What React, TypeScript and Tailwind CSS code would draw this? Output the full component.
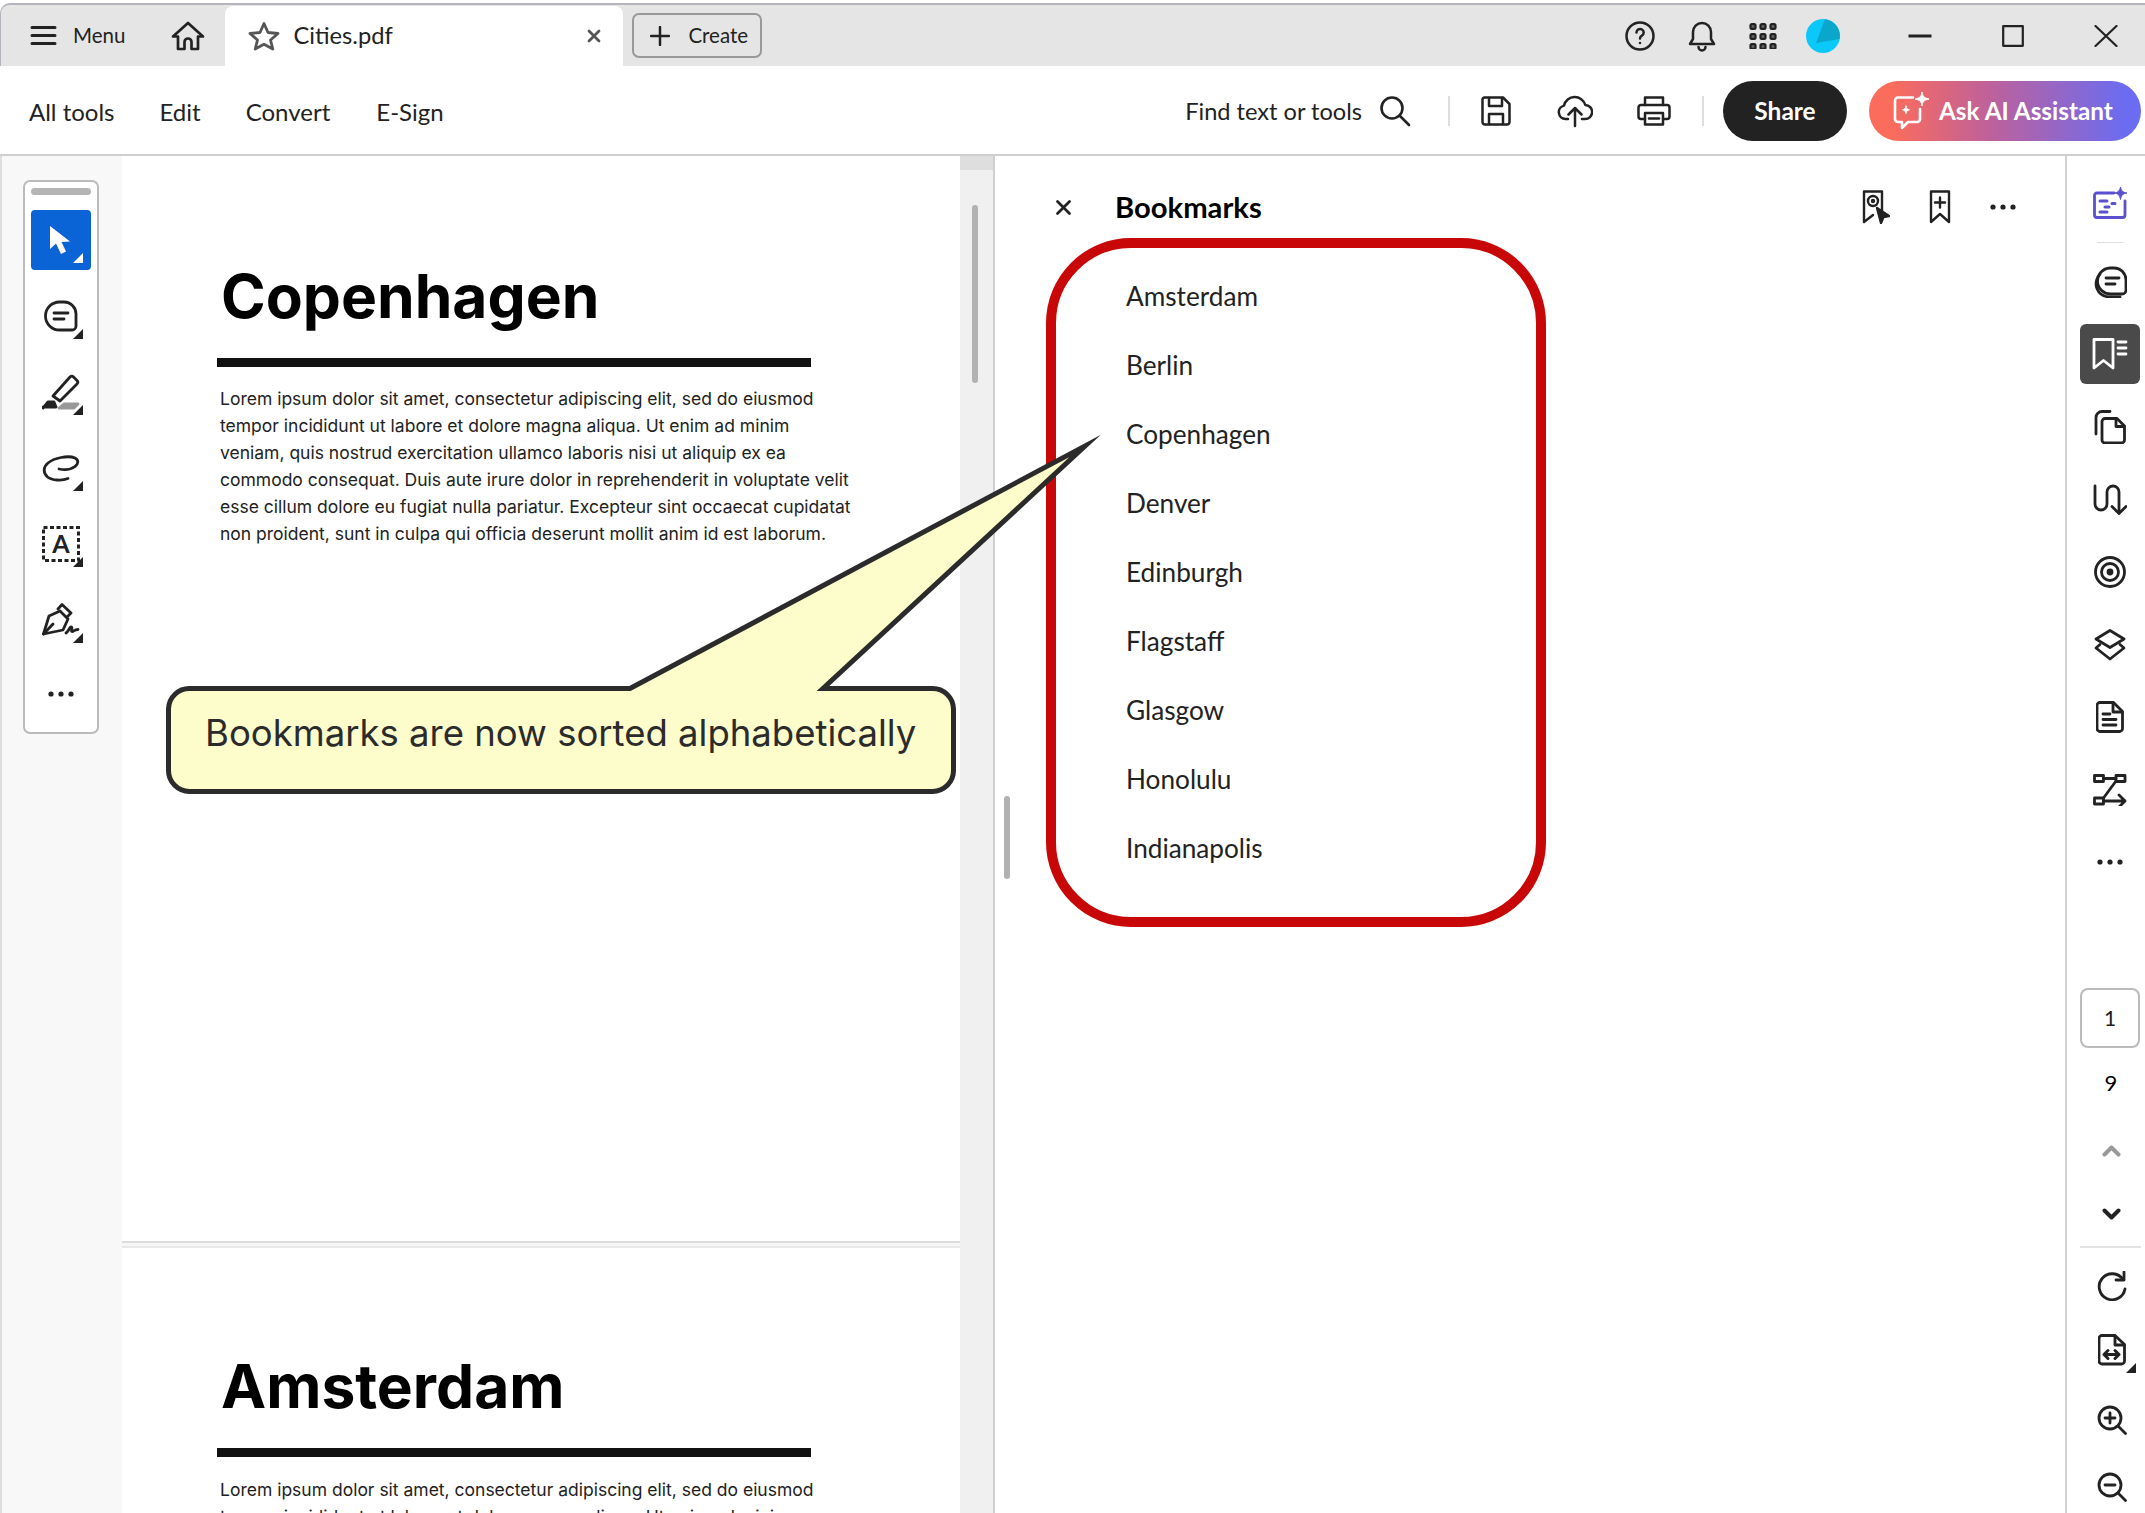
import React from "react";

type SP = { w: number; h: number; children: React.ReactNode; stroke?: string; sw?: number };
const S = ({ w, h, children, stroke = "#222222", sw = 2.5 }: SP) => (
  <svg width={w} height={h} viewBox={`0 0 ${w} ${h}`} fill="none" stroke={stroke} strokeWidth={sw} strokeLinecap="round" strokeLinejoin="round" className="block shrink-0">
    {children}
  </svg>
);

const Tri = ({ light }: { light?: boolean }) => (
  <svg width="10" height="10" viewBox="0 0 10 10" className="absolute right-[8px] bottom-[7px]">
    <path d="M10 0V10H0Z" fill={light ? "#ffffff" : "#222222"} />
  </svg>
);

const ToolBtn = ({ children, active }: { children: React.ReactNode; active?: boolean }) => (
  <div className={`relative w-[60px] h-[60px] flex items-center justify-center rounded-[4px] ${active ? "bg-[#0a64d6]" : ""}`}>
    {children}
    <Tri light={active} />
  </div>
);

const Dots = ({ w = 26 }: { w?: number }) => (
  <svg width={w} height="6" viewBox={`0 0 ${w} 6`} className="block">
    <circle cx="3" cy="3" r="2.6" fill="#222222" />
    <circle cx={w / 2} cy="3" r="2.6" fill="#222222" />
    <circle cx={w - 3} cy="3" r="2.6" fill="#222222" />
  </svg>
);

const RailRow = ({ children, h = "h-[72.5px]" }: { children: React.ReactNode; h?: string }) => (
  <div className={`${h} w-[60px] shrink-0 flex items-center justify-center`}>{children}</div>
);

const paragraph = [
  "Lorem ipsum dolor sit amet, consectetur adipiscing elit, sed do eiusmod",
  "tempor incididunt ut labore et dolore magna aliqua. Ut enim ad minim",
  "veniam, quis nostrud exercitation ullamco laboris nisi ut aliquip ex ea",
  "commodo consequat. Duis aute irure dolor in reprehenderit in voluptate velit",
  "esse cillum dolore eu fugiat nulla pariatur. Excepteur sint occaecat cupidatat",
  "non proident, sunt in culpa qui officia deserunt mollit anim id est laborum.",
];

const bookmarks = ["Amsterdam", "Berlin", "Copenhagen", "Denver", "Edinburgh", "Flagstaff", "Glasgow", "Honolulu", "Indianapolis"];

const Page = ({ title, lines, pad, h, titleGap }: { title: string; lines: string[]; pad: string; h: string; titleGap: string }) => (
  <div className={`${h} ${pad} bg-white overflow-hidden font-[Inter,sans-serif] shrink-0`}>
    <h1 className="h-[80px] pl-[99px] flex items-center text-[60.5px] font-bold text-black leading-none whitespace-nowrap">{title}</h1>
    <div className="ml-[95px] mt-[22px] w-[594px] h-[9px] bg-[#111111]" />
    <div className={`pl-[98px] ${titleGap}`}>
      {lines.map((l) => (
        <p key={l} className="text-[17.5px] leading-[27px] text-[#222222] whitespace-nowrap">{l}</p>
      ))}
    </div>
  </div>
);

export default function App() {
  return (
    <div className="relative h-screen w-full overflow-hidden bg-white font-[Lato,sans-serif] text-[#222222] pt-[3px]">
      {/* Title bar */}
      <div className="h-[63px] bg-[#e5e5e5] border-t-2 border-l border-[#b4b4bc] rounded-tl-[10px] flex items-center">
        <div className="ml-[29px]">
          <S w={27} h={21} sw={3}>
            <path d="M2 2.5H25M2 10.5H25M2 18.5H25" />
          </S>
        </div>
        <span className="ml-[16px] pb-[1px] text-[20.5px]">Menu</span>
        <div className="ml-[46px]">
          <S w={34} h={30} sw={2.7}>
            <path d="M17 2 L32 15.5 H27 V28 H20.5 V21 a3.5 3.5 0 0 0 -7 0 V28 H7 V15.5 H2 Z" />
          </S>
        </div>
        <div className="ml-[20px] w-[398px] h-[60px] self-end bg-white rounded-t-[8px] flex items-center">
          <div className="ml-[23px]">
            <S w={32} h={30} stroke="#555555" sw={2.8}>
              <path d="M16 2.5 L20 11.5 L30 12.5 L22.5 19 L24.8 28 L16 23.2 L7.2 28 L9.5 19 L2 12.5 L12 11.5 Z" />
            </S>
          </div>
          <span className="ml-[13px] pb-[1px] text-[23.7px] text-[#222222]">Cities.pdf</span>
          <div className="ml-auto mr-[22px]">
            <S w={14} h={14} stroke="#555555" sw={2.8}>
              <path d="M2 2L12 12M12 2L2 12" />
            </S>
          </div>
        </div>
        <div className="ml-[9px] w-[130px] h-[45px] border-2 border-[#999999] rounded-[7px] flex items-center">
          <div className="ml-[16px]">
            <S w={20} h={20}>
              <path d="M10 1V19M1 10H19" />
            </S>
          </div>
          <span className="ml-[18px] pb-[1px] text-[20.5px]">Create</span>
        </div>
        <div className="ml-auto">
          <S w={30} h={30}>
            <circle cx="15" cy="15" r="13.5" />
            <path d="M11.5 11.5a3.6 3.6 0 1 1 5.4 3.2c-1.2.7-1.9 1.4-1.9 2.8" />
            <path d="M15 22h.01" />
          </S>
        </div>
        <div className="ml-[33px]">
          <S w={28} h={32}>
            <path d="M2 24h24l-3-5V12A9 9 0 0 0 5 12v7Z" />
            <path d="M10.5 27a3.5 3.5 0 0 0 7 0" />
          </S>
        </div>
        <div className="ml-[33px]">
          <S w={28} h={26} sw={2.2}>
            {[0, 10, 20].map((y) =>
              [0, 10, 20].map((x) => <rect key={`${x}-${y}`} x={x + 1.5} y={y + 1.2} width="5" height="4.6" rx="1.4" fill="#666666" />)
            )}
          </S>
        </div>
        <div className="ml-[29px]">
          <svg width="34" height="34" viewBox="0 0 34 34" className="block">
            <circle cx="17" cy="17" r="17" fill="#0bc8fa" />
            <path d="M19 .2 A17 17 0 0 1 33.6 20 L10 24 Z" fill="#0aa6cc" />
          </svg>
        </div>
        <div className="ml-[67px]">
          <S w={26} h={4} sw={3}>
            <path d="M1.5 2H24.5" strokeLinecap="butt" />
          </S>
        </div>
        <div className="ml-[69px]">
          <S w={22} h={22} sw={2.2}>
            <rect x="1.2" y="1.2" width="19.6" height="19.6" />
          </S>
        </div>
        <div className="ml-[70px] mr-[27px]">
          <S w={24} h={22} sw={2.2}>
            <path d="M1.5 1L22.5 21M22.5 1L1.5 21" />
          </S>
        </div>
      </div>

      {/* Toolbar */}
      <div className="h-[90px] bg-white border-b-2 border-[#cfcfcf] flex items-center text-[24px]">
        <span className="ml-[29px] pt-[3px]">All tools</span>
        <span className="ml-[45px] pt-[3px]">Edit</span>
        <span className="ml-[45px] pt-[3px]">Convert</span>
        <span className="ml-[46px] pt-[3px]">E-Sign</span>
        <span className="ml-auto pt-[3px] text-[23.6px]">Find text or tools</span>
        <div className="ml-[17px] mt-[2px]">
          <S w={32} h={32} sw={2.6}>
            <circle cx="13" cy="13" r="10.5" />
            <path d="M21 21L30 30" />
          </S>
        </div>
        <div className="ml-[37px] mt-[2px] w-[2px] h-[30px] bg-[#dddddd]" />
        <div className="ml-[31px] mt-[2px]">
          <S w={30} h={30}>
            <path d="M3.5 1.5H22L28.5 8V26a2.5 2.5 0 0 1-2.5 2.5H4A2.5 2.5 0 0 1 1.5 26V3.5a2 2 0 0 1 2-2Z" />
            <path d="M8 2v8h13V2" />
            <path d="M8 28V18h14v10" />
          </S>
        </div>
        <div className="ml-[46px] mt-[2px]">
          <S w={36} h={34}>
            <path d="M11 25H8.5A6.8 6.8 0 0 1 7 11.6 11 11 0 0 1 28.3 11a7 7 0 0 1-.3 14h-3" />
            <path d="M18 32V14M11.5 20.5L18 14l6.5 6.5" />
          </S>
        </div>
        <div className="ml-[44px] mt-[2px]">
          <S w={34} h={30}>
            <path d="M8 9V1.5H26V9" />
            <path d="M8 23H4a2.5 2.5 0 0 1-2.5-2.5v-9A2.5 2.5 0 0 1 4 9h26a2.5 2.5 0 0 1 2.5 2.5v9A2.5 2.5 0 0 1 30 23h-4" />
            <rect x="8" y="17" width="18" height="11.5" />
            <path d="M12 22.5H22" />
          </S>
        </div>
        <div className="ml-[31px] mt-[2px] w-[2px] h-[30px] bg-[#dddddd]" />
        <div className="ml-[19px] mt-[2px] w-[124px] h-[60px] bg-[#222222] rounded-full flex items-center justify-center text-white text-[24.5px] font-bold">Share</div>
        <div className="ml-[22px] mt-[2px] mr-[4px] w-[272px] h-[60px] rounded-full bg-[linear-gradient(90deg,#fb6c5c_0%,#fb6c5c_8%,#bd619c_45%,#6a6cf2_95%)] flex items-center text-white text-[24.3px] font-bold">
          <div className="ml-[24px]">
            <S w={36} h={38} stroke="#ffffff" sw={2.6}>
              <path d="M20 5.5H5a3 3 0 0 0-3 3V27a3 3 0 0 0 3 3h4v6l6-6h9a3 3 0 0 0 3-3V17" />
              <path d="M29 0c.6 4.500 2 6 7 7-5 1-6.400 2.500-7 7-.6-4.500-2-6-7-7 5-1 6.400-2.500 7-7Z" fill="#ffffff" strokeWidth="1" />
              <path d="M13 14c.4 2.500 1.200 3.300 3.500 3.800-2.300.5-3.100 1.300-3.500 3.800-.4-2.500-1.200-3.300-3.500-3.800 2.300-.5 3.100-1.300 3.500-3.800Z" fill="#ffffff" strokeWidth="1" />
            </S>
          </div>
          <span className="ml-[10px]">Ask AI Assistant</span>
        </div>
      </div>

      {/* Main */}
      <div className="flex h-[1357px] overflow-hidden">
        {/* Left rail */}
        <div className="w-[122px] shrink-0 bg-[#f8f8f8] border-l-2 border-[#dedede] pl-[21px] pt-[24px]">
          <div className="w-[76px] h-[554px] bg-white border-2 border-[#bbbbbb] rounded-[7px] px-[6px] pt-[6px]">
            <div className="h-[7px] rounded-full bg-[#b5b5b5]" />
            <div className="mt-[15px] flex flex-col">
              <ToolBtn active>
                <svg width="26" height="30" viewBox="0 0 26 30" className="block mr-[2px]">
                  <path d="M3 1 V24 L9 18.500 L14 29 L19 26.500 L14.500 17 L23 16.500 Z" fill="#ffffff" />
                </svg>
              </ToolBtn>
              <div className="h-[16px]" />
              <ToolBtn>
                <S w={34} h={32} sw={2.8}>
                  <path d="M15.500 2H20a12 12 0 0 1 12 12v12a4 4 0 0 1-4 4H15.500a14 14 0 0 1 0-28Z" />
                  <path d="M10 13H24M10 19H20" />
                </S>
              </ToolBtn>
              <div className="h-[16px]" />
              <ToolBtn>
                <S w={38} h={36} sw={2.8}>
                  <path d="M11 22 L28 3 a2.500 2.500 0 0 1 3.500 0 L35 6.500 a2.500 2.500 0 0 1 0 3.500 L18 27 Z" />
                  <path d="M1 34 L6 28 H12 L14 33 H1Z" fill="#222222" />
                  <path d="M17 34 L22 30 H36 L32 34Z" fill="#999999" stroke="#999999" />
                </S>
              </ToolBtn>
              <div className="h-[16px]" />
              <ToolBtn>
                <S w={38} h={28} sw={2.8}>
                  <path d="M26 24.500c-6 2.500-16 2-20.500-1.500C1 19 1 13 6 9 12 4 26 1 33 4c4 2 3.500 6 0 8.500C29 15.500 22 16 17 15" />
                </S>
              </ToolBtn>
              <div className="h-[16px]" />
              <ToolBtn>
                <svg width="38" height="36" viewBox="0 0 38 36" className="block">
                  <rect x="1.500" y="1.500" width="35" height="33" fill="none" stroke="#222222" strokeWidth="3" strokeDasharray="4 2.500" />
                  <text x="19" y="27" textAnchor="middle" fontFamily="Lato, sans-serif" fontWeight="700" fontSize="25" fill="#222222">A</text>
                </svg>
              </ToolBtn>
              <div className="h-[16px]" />
              <ToolBtn>
                <S w={38} h={34} sw={2.8}>
                  <path d="M1.500 31 L7 13 L18 8 L26 16 L21 27 Z" />
                  <path d="M1.500 31 L11 21" />
                  <path d="M16 6 L20 1.500 L29 10 L25 14" />
                  <path d="M24 30c3-2 4-7 5.500-6s-1 4 .5 4.500 2-2 6-2" />
                </S>
              </ToolBtn>
              <div className="h-[44px] flex items-center justify-center mt-[22px]">
                <Dots />
              </div>
            </div>
          </div>
        </div>

        {/* Document */}
        <div className="w-[838px] shrink-0 flex flex-col overflow-hidden">
          <Page title="Copenhagen" lines={paragraph} pad="pt-[100px]" h="h-[1087px] border-b-2 border-[#dcdcdc]" titleGap="mt-[18px]" />
          <div className="h-[3px] shrink-0 bg-[#f6f6f6]" />
          <div className="h-[2px] shrink-0 bg-[#e8e8e8]" />
          <Page title="Amsterdam" lines={paragraph.slice(0, 2)} pad="pt-[98px]" h="h-[265px]" titleGap="mt-[19px]" />
        </div>

        {/* Doc scrollbar */}
        <div className="w-[35px] shrink-0 bg-[#f0f0f0] border-r-2 border-[#d0d0d0] flex flex-col">
          <div className="h-[14px] bg-[#dedede]" />
          <div className="ml-[12px] mt-[35px] w-[6px] h-[178px] rounded-full bg-[#b2b2b2]" />
        </div>

        {/* Bookmarks panel */}
        <div className="relative flex-1 bg-white">
          <div className="absolute left-[9px] top-[640px] w-[6px] h-[83px] rounded-full bg-[#b2b2b2]" />
          <div className="mt-[31px] h-[40px] flex items-center">
            <div className="ml-[60px]">
              <S w={17} h={17} sw={2.8}>
                <path d="M2.500 2.500L14.500 14.500M14.500 2.500L2.500 14.500" />
              </S>
            </div>
            <span className="ml-[43px] pb-[1px] text-[29.2px] font-bold text-black">Bookmarks</span>
            <div className="ml-auto">
              <S w={28} h={34} sw={2.4}>
                <path d="M20 23V1.500H2V32L11 25" />
                <circle cx="11" cy="11" r="5" />
                <circle cx="11" cy="11" r="1" />
                <path d="M15 18L27 26L21.500 27L19 33Z" fill="#222222" />
              </S>
            </div>
            <div className="ml-[39px]">
              <S w={22} h={34} sw={2.4}>
                <path d="M2 1.500H20V32L11 24L2 32Z" />
                <path d="M11 7.500V17.500M6 12.500H16" />
              </S>
            </div>
            <div className="ml-[39px] mr-[49px]">
              <Dots />
            </div>
          </div>
          <div className="ml-[51px] mt-[11px] w-[500px] h-[689px] border-[10px] border-[#c80808] rounded-[85px] pl-[70px] pt-[14px]">
            {bookmarks.map((b) => (
              <div key={b} className="h-[69px] flex items-center text-[26.2px] text-[#222222]">{b}</div>
            ))}
          </div>
        </div>

        {/* Right rail */}
        <div className="w-[80px] shrink-0 border-l-2 border-[#d0d0d0] pl-[13px] bg-white flex flex-col">
          <div className="h-[11px] shrink-0" />
          <RailRow h="h-[72px]">
            <S w={34} h={32} stroke="#5b50cf" sw={2.8}>
              <path d="M21 6H4A2.500 2.500 0 0 0 1.500 8.500V28a2.500 2.500 0 0 0 2.500 2.500H29.500A2.500 2.500 0 0 0 32 28V14" />
              <path d="M7 14H14M7 25H14M12 20H16M19 16.500h3" strokeWidth="3" />
              <path d="M27.500 0c.6 3.500 2 5.400 6.500 6-4.500.6-5.900 2.500-6.500 6.500-.6-4-2-5.900-6.500-6.500 4.500-.6 5.900-2.500 6.500-6Z" fill="#5b50cf" strokeWidth="1" />
            </S>
          </RailRow>
          <div className="h-[7px] shrink-0 flex items-center justify-center w-[60px]">
            <div className="w-[26px] h-[1px] bg-[#dddddd]" />
          </div>
          <RailRow h="h-[72px]">
            <S w={34} h={32} sw={2.8}>
              <path d="M17 2h4a12 12 0 0 1 12 12v10a4 4 0 0 1-4 4H18a13 13 0 0 1-1-26Z" />
              <path d="M13 12H26M13 18H22" />
              <path d="M7 8C-1 18 4 31 18 31h9" />
            </S>
          </RailRow>
          <div className="mt-[6px] h-[60px] w-[60px] shrink-0 rounded-[6px] bg-[#4a4a4a] flex items-center justify-center">
            <S w={36} h={32} stroke="#ffffff" sw={2.8}>
              <path d="M2 1.500H21V30L11.500 22.500L2 30Z" />
              <path d="M26 4H34M26 10H34M26 16H34" />
            </S>
          </div>
          <div className="h-[7px] shrink-0" />
          <RailRow>
            <S w={32} h={34} sw={2.8}>
              <path d="M16 1.500H8a6 6 0 0 0-6 6V24" />
              <path d="M11 8.500H23L30.500 16V30a3 3 0 0 1-3 3H11a3 3 0 0 1-3-3V11.500a3 3 0 0 1 3-3Z" />
              <path d="M22 9V16.500H30" />
            </S>
          </RailRow>
          <RailRow>
            <S w={34} h={32} sw={2.8}>
              <path d="M2 2V20a6 6 0 0 0 12 0V8a6 6 0 0 1 12 0V29" />
              <path d="M19 22.500L26 29.500L33 22.500" />
            </S>
          </RailRow>
          <RailRow>
            <S w={32} h={32} sw={2.8}>
              <circle cx="16" cy="16" r="14.500" />
              <circle cx="16" cy="16" r="8.500" />
              <circle cx="16" cy="16" r="2" fill="#222222" />
            </S>
          </RailRow>
          <RailRow>
            <S w={32} h={32} sw={2.8}>
              <path d="M16 1.500L30 10L16 18.500L2 10Z" />
              <path d="M6 15.500L2 19L16 30L30 19L26 15.500" />
            </S>
          </RailRow>
          <RailRow>
            <S w={28} h={32} sw={2.8}>
              <path d="M4 1.500H17.500L26.500 10.500V27.500a3 3 0 0 1-3 3H4a3 3 0 0 1-3-3V4.500a3 3 0 0 1 3-3Z" />
              <path d="M17 2V11H26" />
              <path d="M7 13H14M7 18.500H20M7 24H20" />
            </S>
          </RailRow>
          <RailRow>
            <S w={34} h={32} sw={2.8}>
              <rect x="1.500" y="1.500" width="9" height="6" />
              <rect x="23" y="1.500" width="9" height="6" />
              <rect x="1.500" y="24" width="9" height="6" />
              <path d="M10.500 4.500H23M23 7L10.500 24M10.500 27H32M26 21l6 6-6 6" />
            </S>
          </RailRow>
          <RailRow>
            <Dots />
          </RailRow>

          <div className="mt-[89.5px] h-[60px] w-[60px] shrink-0 border-2 border-[#bbbbbb] rounded-[8px] flex items-center justify-center text-[21px]">1</div>
          <RailRow h="h-[68px]"><span className="text-[22px] text-black ml-[2px]">9</span></RailRow>
          <RailRow h="h-[70px]">
            <div className="ml-[3px]">
              <S w={19} h={12} stroke="#999999" sw={4}>
                <path d="M2.500 9.500L9.500 2.500L16.500 9.500" />
              </S>
            </div>
          </RailRow>
          <RailRow h="h-[55px]">
            <div className="ml-[3px]">
              <S w={19} h={12} sw={4}>
                <path d="M2.500 2.500L9.500 9.500L16.500 2.500" />
              </S>
            </div>
          </RailRow>
          <div className="mt-[5px] h-[2px] w-[61px] bg-[#e3e3e3] shrink-0" />
          <RailRow h="h-[76px]">
            <div className="ml-[3px]">
              <S w={30} h={30} sw={2.8}>
                <path d="M26 8.500A13 13 0 1 0 28 18" />
                <path d="M27 1v8h-8" />
              </S>
            </div>
          </RailRow>
          <RailRow h="h-[51px]">
            <div className="relative ml-[3px]">
              <S w={28} h={32} sw={2.8}>
                <path d="M4 1.500H17L26.500 10.500V27a3 3 0 0 1-3 3H4a3 3 0 0 1-3-3V4.500a3 3 0 0 1 3-3Z" />
                <path d="M17 2v9h9" />
                <path d="M6 20.500H21M10 16.500l-4 4 4 4M17 16.500l4 4-4 4" strokeWidth="3" />
              </S>
              <svg width="10" height="10" viewBox="0 0 10 10" className="absolute left-[28px] top-[29px]">
                <path d="M10 0V10H0Z" fill="#222222" />
              </svg>
            </div>
          </RailRow>
          <RailRow h="h-[89px]">
            <div className="ml-[4px]">
              <S w={30} h={30} sw={2.8}>
                <circle cx="13" cy="13" r="11" />
                <path d="M13 8V18M8 13H18" />
                <path d="M21 21L28.500 28.500" />
              </S>
            </div>
          </RailRow>
          <RailRow h="h-[46px]">
            <div className="ml-[4px]">
              <S w={30} h={30} sw={2.8}>
                <circle cx="13" cy="13" r="11" />
                <path d="M8 13H18" />
                <path d="M21 21L28.500 28.500" />
              </S>
            </div>
          </RailRow>
        </div>
      </div>

      {/* Callout over the page */}
      <svg width="2145" height="1513" viewBox="0 0 2145 1513" className="absolute left-0 top-0 pointer-events-none">
        <path
          d="M190 688.500 H630 L1085 446 L823 688.500 H932 A21 21 0 0 1 953.500 709 V770 A21 21 0 0 1 932 791.500 H190 A21 21 0 0 1 168.500 770 V709 A21 21 0 0 1 190 688.500 Z"
          fill="#fdfccb"
          stroke="#2b2b2b"
          strokeWidth="5"
          strokeLinejoin="miter"
          strokeMiterlimit="12"
        />
      </svg>
      <div className="absolute left-[205px] top-[686px] h-[95px] flex items-center font-[Inter,sans-serif] text-[36.5px] text-[#2b2b2b] whitespace-nowrap">
        Bookmarks are now sorted alphabetically
      </div>
    </div>
  );
}
